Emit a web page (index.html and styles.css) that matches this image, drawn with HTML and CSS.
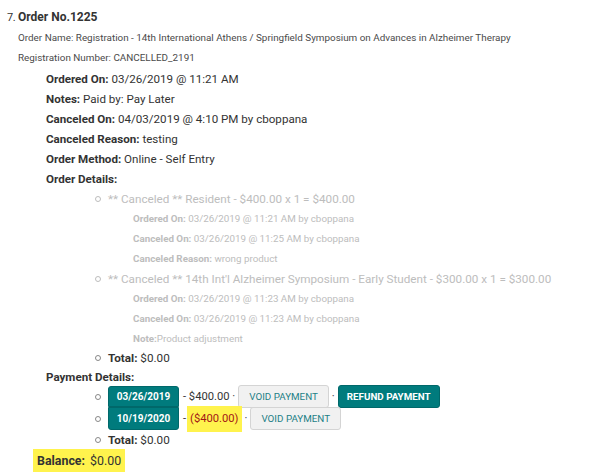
FILE: index.html
```html
<!DOCTYPE html>
<html>
<head>
<meta charset="utf-8">
<link rel="stylesheet" href="styles.css">
</head>
<body>
<div class="order">
  <div class="title"><span class="num">7.</span><b>Order No.1225</b></div>
  <div class="meta">Order Name: Registration - 14th International Athens / Springfield Symposium on Advances in Alzheimer Therapy</div>
  <div class="meta">Registration Number: CANCELLED_2191</div>
  <div class="details">
    <div class="row"><b>Ordered On:</b> 03/26/2019 @ 11:21 AM</div>
    <div class="row"><b>Notes:</b> Paid by: Pay Later</div>
    <div class="row"><b>Canceled On:</b> 04/03/2019 @ 4:10 PM by cboppana</div>
    <div class="row"><b>Canceled Reason:</b> testing</div>
    <div class="row"><b>Order Method:</b> Online - Self Entry</div>
    <div class="row"><b>Order Details:</b></div>
    <ul class="items">
      <li class="canceled">
        <div class="line">** Canceled ** Resident - $400.00 x 1 = $400.00</div>
        <div class="sub"><b>Ordered On:</b> 03/26/2019 @ 11:21 AM by cboppana</div>
        <div class="sub"><b>Canceled On:</b> 03/26/2019 @ 11:25 AM by cboppana</div>
        <div class="sub"><b>Canceled Reason:</b> wrong product</div>
      </li>
      <li class="canceled">
        <div class="line">** Canceled ** 14th Int'l Alzheimer Symposium - Early Student - $300.00 x 1 = $300.00</div>
        <div class="sub"><b>Ordered On:</b> 03/26/2019 @ 11:23 AM by cboppana</div>
        <div class="sub"><b>Canceled On:</b> 03/26/2019 @ 11:23 AM by cboppana</div>
        <div class="sub"><b>Note:</b>Product adjustment</div>
      </li>
      <li class="total-item"><div class="line"><b>Total:</b> $0.00</div></li>
    </ul>
    <div class="row pd"><b>Payment Details:</b></div>
    <ul class="items pay">
      <li class="pay-row first">
        <span class="date-btn">03/26/2019</span>
        <span class="amt">- $400.00 ·</span>
        <span class="btn">VOID PAYMENT</span>
        <span class="dot">·</span>
        <span class="btn refund">REFUND PAYMENT</span>
      </li>
      <li class="pay-row second">
        <span class="date-btn">10/19/2020</span>
        <span class="amt">-</span>
        <mark class="neg">($400.00)</mark>
        <span class="dot">·</span>
        <span class="btn">VOID PAYMENT</span>
      </li>
      <li class="total"><div class="line"><b>Total:</b> $0.00</div></li>
    </ul>
  </div>
  <div class="balance"><mark class="hl"><b>Balance:</b></mark><mark class="hl hl2">$0.00</mark></div>
</div>
</body>
</html>
```

FILE: styles.css
```css
html, body {
  margin: 0;
  padding: 0;
  background: #ffffff;
}
body {
  font-family: Roboto, "Liberation Sans", sans-serif;
  color: #333333;
  font-size: 11.6px;
}
b { font-weight: 700; }
.order {
  padding: 7px 0 0 7px;
}
.title {
  font-size: 12px;
  line-height: 20px;
  height: 21px;
}
.title .num {
  display: inline-block;
  width: 11px;
  font-size: 11px;
  letter-spacing: -0.5px;
}
.meta {
  font-size: 9.9px;
  line-height: 20px;
  padding-left: 11px;
  color: #4a4a4a;
}
.details {
  padding-left: 39px;
  padding-top: 1px;
}
.row {
  line-height: 20px;
}
.row.pd {
  margin-top: -1px;
  margin-bottom: -1px;
}
.items {
  list-style: none;
  margin: 0;
  padding: 0 0 0 49px;
}
.items li {
  position: relative;
  padding-left: 13px;
}
.items li::before {
  content: "";
  position: absolute;
  left: 0;
  top: 7px;
  width: 4px;
  height: 4px;
  border: 1px solid #888;
  border-radius: 50%;
}
.line {
  line-height: 20px;
  font-size: 11.7px;
}
.canceled { color: #bdbdbd; }
.canceled::before { border-color: #bdbdbd !important; }
.sub {
  font-size: 9.8px;
  line-height: 20px;
  padding-left: 25px;
}
.total-item { margin-top: -1px; }
.pay-row {
  display: flex;
  align-items: center;
  gap: 3px;
  font-size: 11.2px;
}
.pay-row.first { height: 21px; }
.pay-row.second { height: 23px; }
.pay-row::before { top: 8px !important; }
.pay-row.second::before { top: 9px !important; }
.date-btn {
  display: inline-block;
  background: #007b7d;
  color: #fff;
  font-weight: 700;
  font-size: 10px;
  width: 71px;
  text-align: center;
  border: 1px solid #00686a;
  box-sizing: border-box;
  margin-right: 1px;
}
.first .date-btn {
  border-radius: 3px 3px 0 0;
  height: 21px;
  line-height: 20px;
  align-self: flex-end;
}
.second .date-btn {
  border-radius: 0 0 3px 3px;
  height: 23px;
  line-height: 22px;
  align-self: flex-start;
}
.amt { color: #333; }
.dot { color: #333; }
.btn {
  display: inline-block;
  background: #f1f1f1;
  border: 1px solid #d4d4d4;
  border-radius: 3px;
  color: #1d7f86;
  font-size: 9.8px;
  line-height: 21px;
  padding: 0 10px;
}
.btn.refund {
  background: #007b7d;
  border-color: #00686a;
  color: #fff;
  font-weight: 700;
  padding: 0 8px;
}
.neg {
  background: #fff34d;
  color: #a31515;
  padding: 6px 3px 7px 3px;
  margin-left: -2px;
}
.balance {
  display: flex;
  padding-left: 26px;
  margin-top: -1px;
  font-size: 12.4px;
}
.hl {
  background: #fff34d;
  color: #333;
  display: block;
  line-height: 24px;
  padding: 0 3px 0 4px;
}
.hl2 {
  padding: 0 4px 0 2px;
}
```
